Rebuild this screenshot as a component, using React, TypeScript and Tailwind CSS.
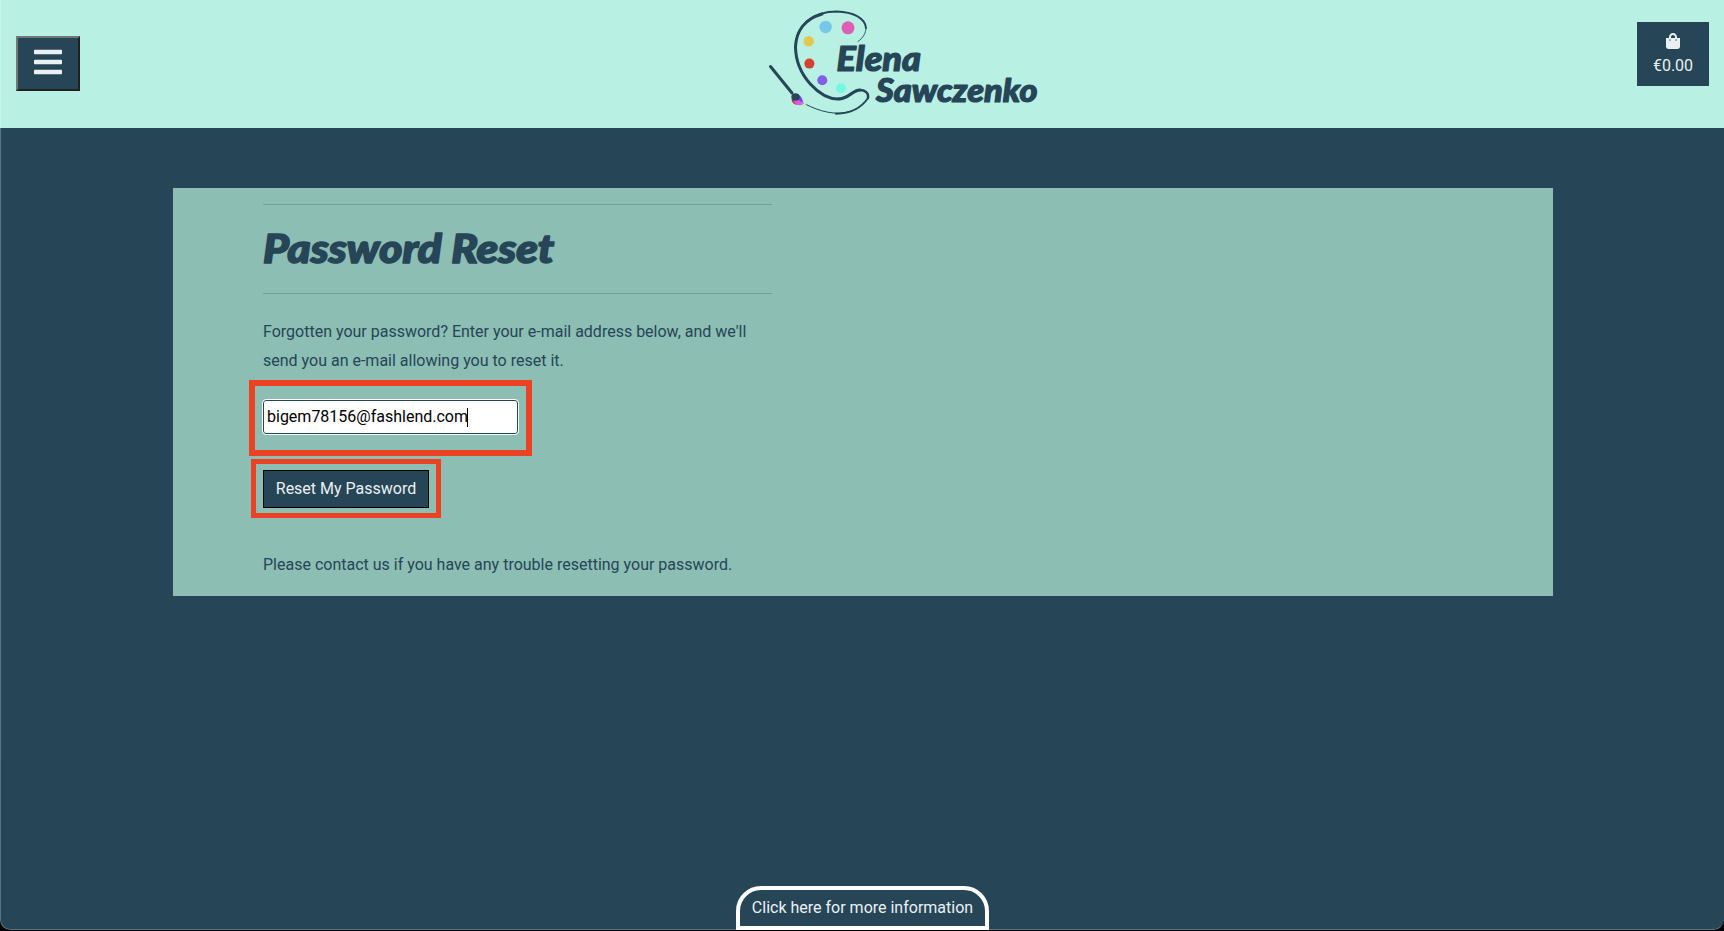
import { FaBars, FaShoppingBag } from "react-icons/fa";

function Logo() {
  return (
    <svg
      viewBox="0 0 300 128"
      className="h-32 w-[300px]"
      role="img"
      aria-label="Elena Sawczenko"
    >
      <g fill="none" stroke="#264557" strokeLinecap="round" strokeLinejoin="round">
        <path d="M108 41.500C113 38 116 33 116 28" strokeWidth="0.900" />
        <path d="M116 28C115 18 103 12 87 11.500C63 11.500 46 25 45.500 47" strokeWidth="2" />
        <path d="M72 14C55 19 46 31 45.500 47C46 77 71 99 88 99C99 99 102 90 110 90" strokeWidth="3" />
        <path d="M88 99C99 99 103 90 110 90C115 90 119 93 118 98" strokeWidth="2.400" />
        <path d="M118 98C112 107 101 113.500 86 113.800" strokeWidth="1.900" />
        <path d="M100 111.500C85 116 69 111 56 104.500" strokeWidth="1" />
        <path d="M20.500 66.500L42 93" strokeWidth="3" />
      </g>
      <circle cx="75.600" cy="27" r="6.200" fill="#78c6e8" />
      <circle cx="98" cy="27.800" r="6.500" fill="#dc5eb5" />
      <circle cx="58.700" cy="41.300" r="5.200" fill="#e6c74d" />
      <circle cx="59.400" cy="63.600" r="5" fill="#d4422e" />
      <circle cx="72.300" cy="80.300" r="5" fill="#815fe4" />
      <circle cx="91" cy="88.300" r="5" fill="#74f8e1" />
      <path d="M41.500 99.500C42 103.500 45 105.500 50 104.500L46 100Z" fill="#c9304f" />
      <path d="M48 94.500C52 96 52.500 101 54 104L48 101Z" fill="#7e3af2" />
      <path d="M43.500 101C46.500 98.500 51 100 53 104.500C49.500 106 45.500 105 43.500 101Z" fill="#dc5be0" />
      <ellipse cx="45.500" cy="97" rx="4.200" ry="3.800" fill="#264557" />
      <path d="M51.500 101L54.500 104.500L52.500 105Z" fill="#58bdf0" />
      <path d="M52.500 103.800L57 104.800L53 105.800Z" fill="#eee94c" />
      <g
        fill="#264557"
        stroke="#264557"
        strokeWidth="1.200"
        strokeLinejoin="round"
        fontFamily="Lato, sans-serif"
        fontWeight="900"
        fontStyle="italic"
      >
        <text x="86.500" y="70.500" fontSize="34" textLength="84.500" lengthAdjust="spacingAndGlyphs">
          Elena
        </text>
        <text x="126" y="102" fontSize="32" textLength="161.500" lengthAdjust="spacingAndGlyphs">
          Sawczenko
        </text>
      </g>
    </svg>
  );
}

function Header() {
  return (
    <header className="flex h-32 items-start justify-between bg-[#b8f1e4] pr-[15px] pl-4">
      <button
        aria-label="Menu"
        className="mt-9 flex h-[55px] w-16 items-center justify-center border-2 border-t-[#767676] border-r-[#212121] border-b-[#212121] border-l-[#767676] bg-[#264557] pb-1 text-[32px] text-[#ebf1f2]"
      >
        <FaBars className="h-8 w-7" />
      </button>
      <div className="ml-[82px] h-32">
        <Logo />
      </div>
      <div className="mt-[22px] flex h-16 w-[72px] flex-col items-center bg-[#264557] pt-[11px] text-[#ebf1f2]">
        <FaShoppingBag className="h-4 w-[14px]" />
        <span className="mt-[5px] text-base leading-6">€0.00</span>
      </div>
    </header>
  );
}

export default function App() {
  return (
    <div className="h-[931px] w-full overflow-hidden bg-black font-[Roboto,sans-serif] text-base text-[#264557]">
      <div className="relative flex h-[930px] flex-col overflow-hidden rounded-b-[10px] bg-[#264557]">
        <Header />
        <main className="mt-[60px] mr-[171px] ml-[173px] h-[408px] bg-[#8cbeb3] pt-4 pl-[90px]">
          <div className="w-[509px]">
            <hr className="border-[#70a398]" />
            <h1 className="flex h-[88px] items-center">
              <svg viewBox="0 0 294 56" className="h-14 w-[294px] overflow-visible">
                <text
                  x="0"
                  y="42"
                  fill="#264557"
                  stroke="#264557"
                  strokeWidth="1.600"
                  strokeLinejoin="round"
                  fontFamily="Lato, sans-serif"
                  fontWeight="900"
                  fontStyle="italic"
                  fontSize="39"
                  textLength="291"
                  lengthAdjust="spacingAndGlyphs"
                >
                  Password Reset
                </text>
              </svg>
            </h1>
            <hr className="border-[#70a398]" />
            <p className="mt-[23px] leading-[29px]">
              Forgotten your password? Enter your e-mail address below, and we'll
              send you an e-mail allowing you to reset it.
            </p>
            <form className="mt-[25px]">
              <div className="relative w-[255px]">
                <div className="flex h-[34px] items-center rounded-[3px] border border-[#264557] bg-white pl-[3px] text-black outline-1 outline-white">
                  <span>bigem78156@fashlend.com</span>
                  <span className="-ml-px h-[19px] w-px bg-black" />
                </div>
                <div className="pointer-events-none absolute -top-5 -left-[14px] h-[76px] w-[283px] border-6 border-[#eb4224]" />
              </div>
              <div className="relative mt-9 w-[166px]">
                <button
                  type="button"
                  className="h-[38px] w-full border border-black bg-[#264557] text-[#ebf1f2]"
                >
                  Reset My Password
                </button>
                <div className="pointer-events-none absolute -top-[11px] -left-3 h-[59px] w-[190px] border-[5px] border-[#eb4224]" />
              </div>
            </form>
            <p className="mt-[42px] leading-[29px]">
              Please contact us if you have any trouble resetting your password.
            </p>
          </div>
        </main>
        <button className="mx-auto mt-auto flex h-11 w-[253px] items-center justify-center rounded-t-[25px] border-4 border-white pl-px text-[#ebf1f2]">
          Click here for more information
        </button>
        <div className="pointer-events-none absolute inset-0 rounded-b-[10px] border-x border-b border-r-transparent border-b-white/25 border-l-white/25" />
      </div>
    </div>
  );
}
